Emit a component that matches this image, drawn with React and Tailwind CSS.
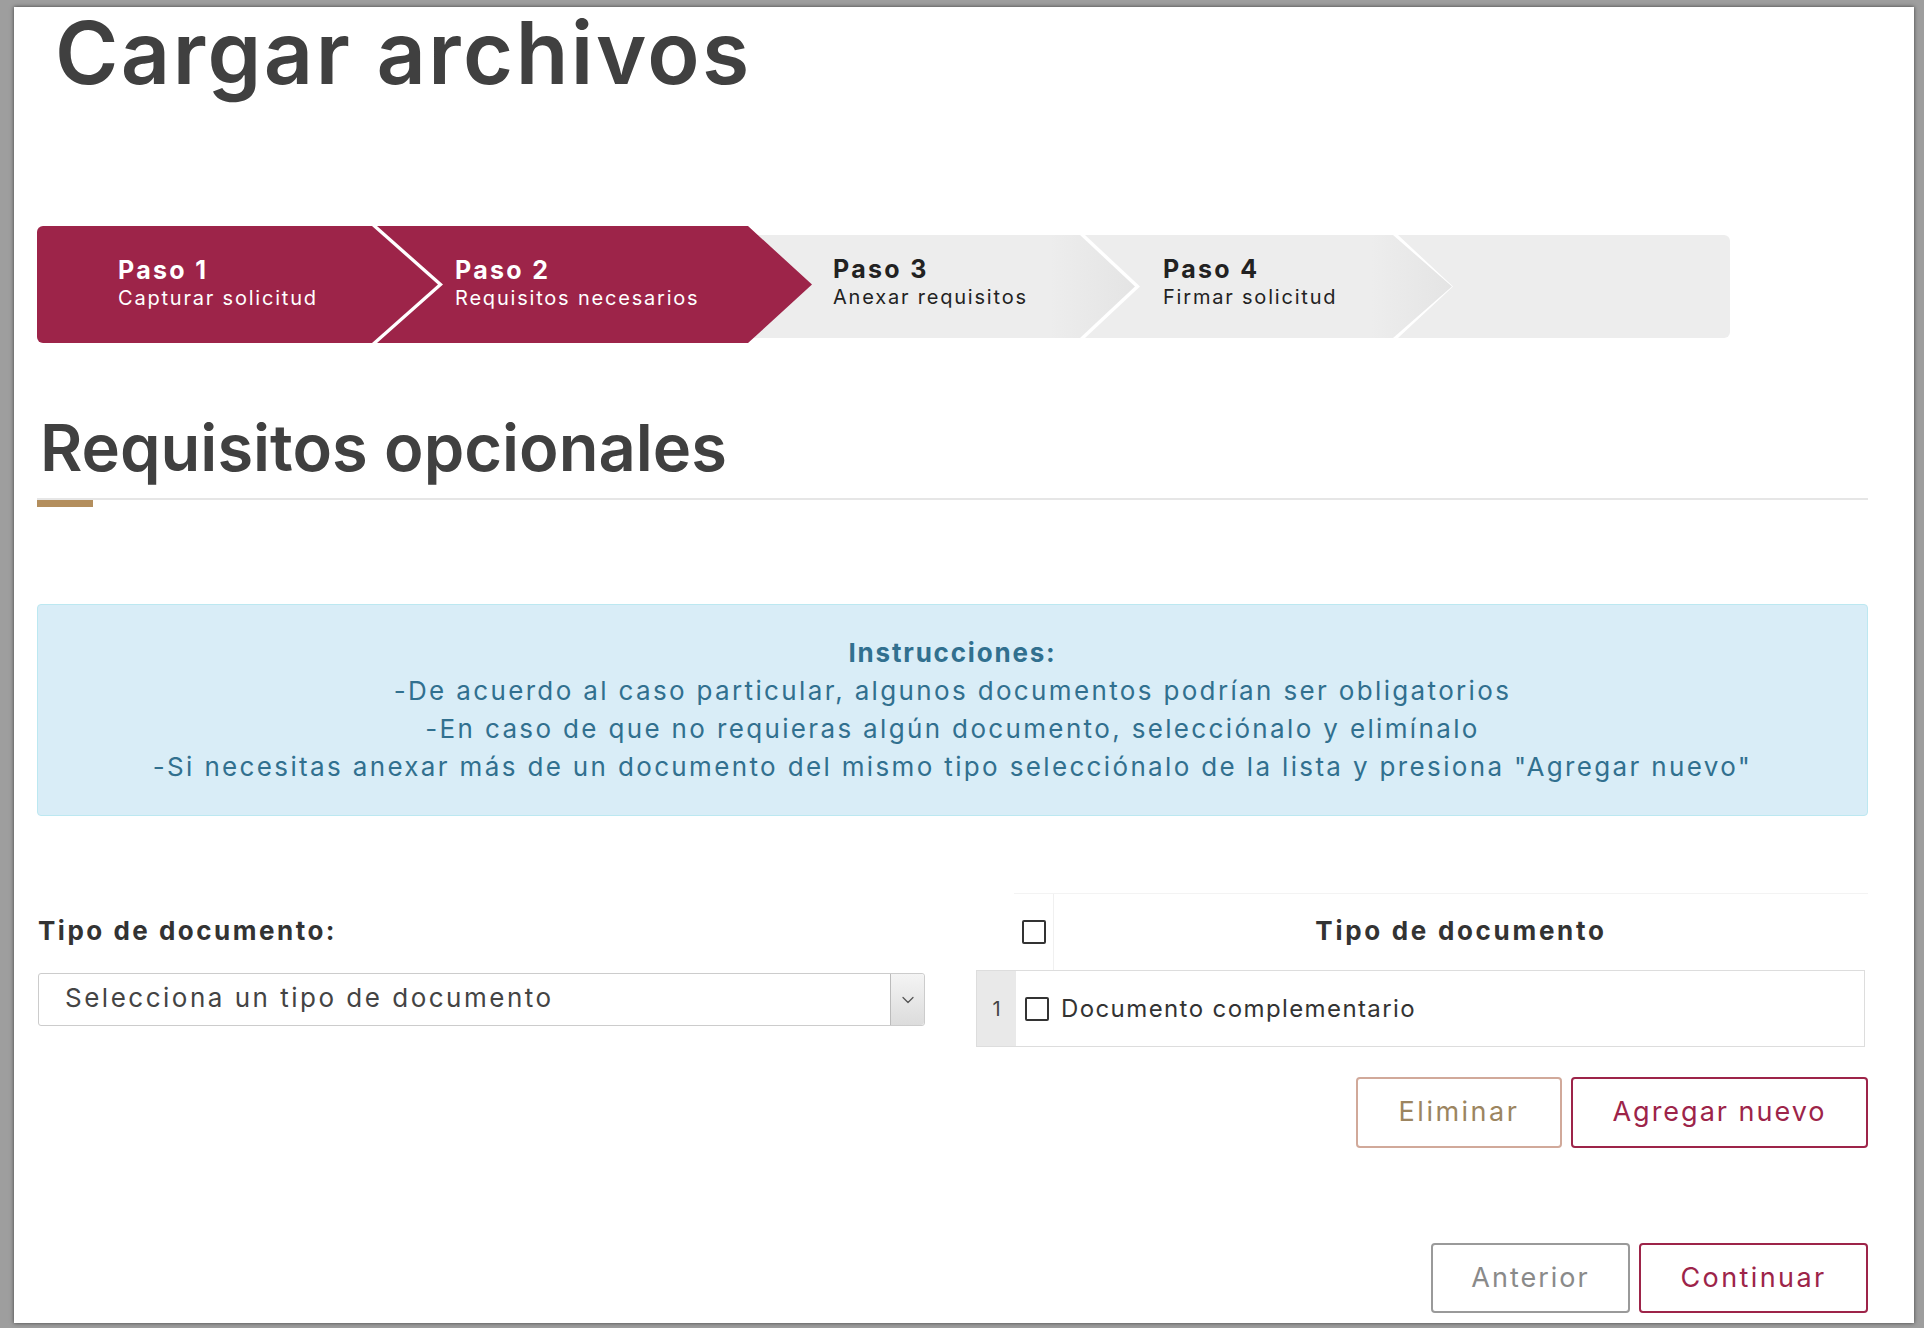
import React from 'react';
import { ChevronDown } from 'lucide-react';

const font = { fontFamily: 'Inter, "Open Sans", sans-serif' };

export default function App() {
  return (
    <div className="w-[1924px] h-[1328px] bg-[#9e9e9e] pl-[14px] pr-[10px] pt-[7px] pb-[5px]" style={font}>
      <div className="h-full bg-white shadow-[0_0_4px_rgba(0,0,0,0.6)] pl-[23px] pr-[46px] flex flex-col">
        {/* page title */}
        <h1 className="mt-[3px] ml-[18px] text-[86px] leading-none font-semibold text-[#404040] tracking-[2.5px]">
          Cargar archivos
        </h1>

        {/* stepper */}
        <div className="mt-[130px] flex items-start h-[117px]">
          <div className="relative z-20 w-[401px] h-[117px] bg-[#9d2449] rounded-l-[6px] [clip-path:polygon(0_0,335px_0,401px_50%,335px_100%,0_100%)] pl-[81px] pb-[3px] flex flex-col justify-center text-white">
            <span className="text-[25px] font-bold leading-[30px] tracking-[2.3px]">Paso 1</span>
            <span className="text-[20px] leading-[26px] tracking-[1.8px]">Capturar solicitud</span>
          </div>
          <div className="relative z-20 -ml-[61px] w-[435px] h-[117px] bg-[#9d2449] [clip-path:polygon(0_0,371px_0,435px_50%,371px_100%,0_100%,66px_50%)] pl-[78px] pb-[3px] flex flex-col justify-center text-white">
            <span className="text-[25px] font-bold leading-[30px] tracking-[2.3px]">Paso 2</span>
            <span className="text-[20px] leading-[26px] tracking-[1.8px]">Requisitos necesarios</span>
          </div>
          <div className="relative z-10 -ml-[64px] mt-[9px] w-[387px] h-[103px] bg-[linear-gradient(to_right,#ededed_78%,#e4e4e4)] [clip-path:polygon(0_0,332px_0,387px_50%,332px_100%,0_100%)] pl-[85px] pb-[10px] flex flex-col justify-center text-[#222]">
            <span className="text-[25px] font-bold leading-[30px] tracking-[2.3px]">Paso 3</span>
            <span className="text-[20px] leading-[26px] tracking-[1.8px]">Anexar requisitos</span>
          </div>
          <div className="relative z-0 -ml-[50px] mt-[9px] w-[367px] h-[103px] bg-[linear-gradient(to_right,#ededed_78%,#e4e4e4)] [clip-path:polygon(0_0,308px_0,367px_50%,308px_100%,0_100%,55px_50%)] pl-[78px] pb-[10px] flex flex-col justify-center text-[#222]">
            <span className="text-[25px] font-bold leading-[30px] tracking-[2.3px]">Paso 4</span>
            <span className="text-[20px] leading-[26px] tracking-[1.8px]">Firmar solicitud</span>
          </div>
          <div className="-ml-[54px] mt-[9px] w-[332px] h-[103px] bg-[#ededed] rounded-r-[6px] [clip-path:polygon(0_0,100%_0,100%_100%,0_100%,55px_50%)]" />
        </div>

        {/* section title */}
        <h2 className="mt-[72px] ml-[3px] text-[65px] leading-none font-semibold text-[#404040]">
          Requisitos opcionales
        </h2>
        <div className="mt-[18px] h-[2px] bg-[#e6e6e6]" />
        <div className="w-[56px] h-[7px] bg-[#b38e5d]" />

        {/* instructions */}
        <div className="mt-[97px] h-[212px] bg-[#d9edf7] border border-[#bce8f1] rounded-[4px] pt-[29px] text-center text-[#31708f] text-[26px] leading-[38px] tracking-[2.35px]">
          <p className="font-bold tracking-[1.8px]">Instrucciones:</p>
          <p>-De acuerdo al caso particular, algunos documentos podrían ser obligatorios</p>
          <p>-En caso de que no requieras algún documento, selecciónalo y elimínalo</p>
          <p>-Si necesitas anexar más de un documento del mismo tipo selecciónalo de la lista y presiona "Agregar nuevo"</p>
        </div>

        {/* document picker + table */}
        <div className="mt-[77px] grid grid-cols-[888px_1fr] gap-x-[51px]">
          <div className="pt-[19px] pl-[1px]">
            <label className="block text-[26px] leading-[38px] font-bold text-[#333] tracking-[2.5px]">Tipo de documento:</label>
            <div className="mt-[23px] h-[53px] border border-[#cccccc] rounded-[3px] flex items-center">
              <span className="flex-1 pl-[26px] pb-[4px] text-[26px] text-[#444] tracking-[2.5px]">Selecciona un tipo de documento</span>
              <div className="w-[34px] h-full border-l border-[#bbbbbb] bg-[linear-gradient(#f4f4f4,#dcdcdc)] flex items-center justify-center rounded-r-[3px]">
                <ChevronDown className="w-[20px] h-[20px] text-[#555]" strokeWidth={1.5} />
              </div>
            </div>
          </div>

          <div>
            <div className="ml-[38px] h-[77px] flex border-t border-[#f3f3f3]">
              <div className="w-[40px] border-r border-[#f0f0f0] flex items-center justify-center">
                <span className="w-[24px] h-[24px] border-2 border-[#333] rounded-[2px]" />
              </div>
              <div className="flex-1 flex items-center justify-center pb-[3px] text-[26px] font-bold text-[#333] tracking-[2.7px]">
                Tipo de documento
              </div>
            </div>
            <div className="h-[77px] flex border border-[#dddddd] mr-[3px]">
              <div className="w-[39px] bg-[#e9e9e9] flex items-center justify-center text-[20px] text-[#444]">1</div>
              <div className="flex-1 flex items-center pl-[9px] gap-[12px] text-[24px] text-[#333] tracking-[1.4px]">
                <span className="w-[24px] h-[24px] border-2 border-[#333] rounded-[2px]" />
                Documento complementario
              </div>
            </div>
          </div>
        </div>

        {/* table actions */}
        <div className="mt-[30px] flex justify-end gap-[9px]">
          <button className="w-[206px] h-[71px] border-2 border-[#d1a99a] rounded-[4px] text-[27px] tracking-[2.5px] text-[#9c8560]">
            Eliminar
          </button>
          <button className="w-[297px] h-[71px] border-2 border-[#9d2449] rounded-[4px] text-[27px] tracking-[2px] text-[#9d2449]">
            Agregar nuevo
          </button>
        </div>

        {/* navigation */}
        <div className="mt-[95px] flex justify-end gap-[9px]">
          <button className="w-[199px] h-[70px] border-2 border-[#9a9a9a] rounded-[4px] text-[27px] tracking-[2px] text-[#8a8a8a]">
            Anterior
          </button>
          <button className="w-[229px] h-[70px] border-2 border-[#9d2449] rounded-[4px] text-[27px] tracking-[2.4px] text-[#9d2449]">
            Continuar
          </button>
        </div>
      </div>
    </div>
  );
}
